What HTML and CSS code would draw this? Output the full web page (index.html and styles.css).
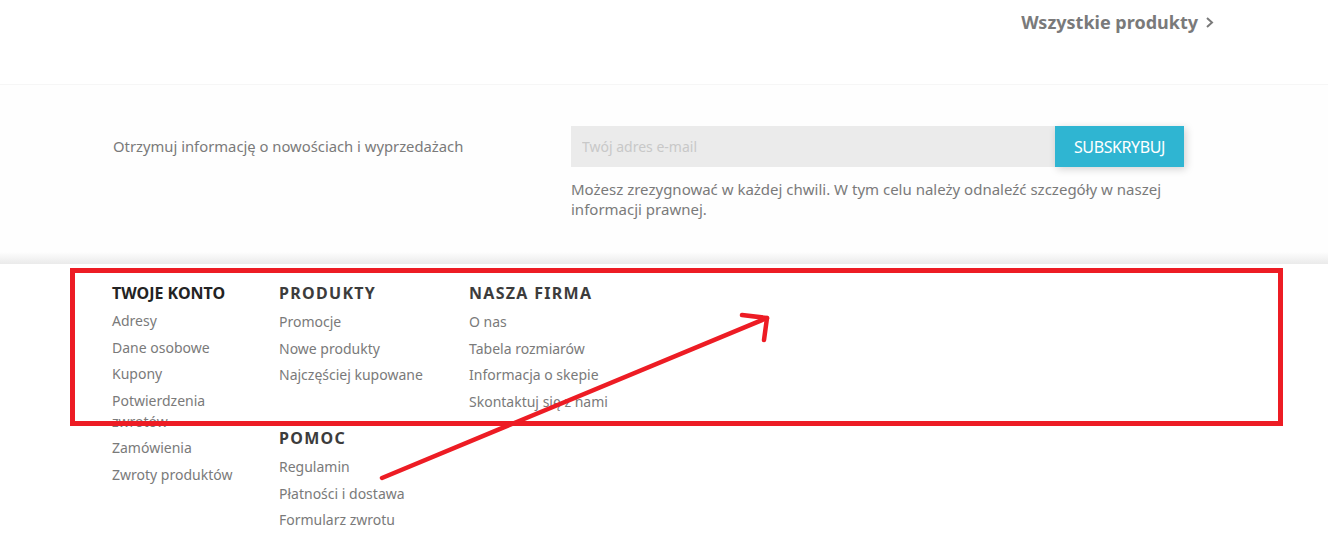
FILE: index.html
```html
<!DOCTYPE html>
<html>
  <head>
    <meta charset="UTF-8">
    <title>Sklep - stopka</title>
    <link rel="stylesheet" href="styles.css">
  </head>
  <body>
    <div class="top-bar">
      <div class="container top-inner">
        <a class="all-products" href="#">Wszystkie produkty
          <svg class="chevron" width="9" height="13" viewBox="0 0 9 13"><polyline points="2,2 7,6.5 2,11" fill="none" stroke="#7a7a7a" stroke-width="2"/></svg>
        </a>
      </div>
    </div>

    <section class="newsletter">
      <div class="container newsletter-row">
        <p class="newsletter-label">Otrzymuj informację o nowościach i wyprzedażach</p>
        <div class="newsletter-form">
          <form class="subscribe">
            <input type="text" name="email" placeholder="Twój adres e-mail">
            <button type="button">Subskrybuj</button>
          </form>
          <p class="conditions">Możesz zrezygnować w każdej chwili. W tym celu należy odnaleźć szczegóły w naszej informacji prawnej.</p>
        </div>
      </div>
    </section>

    <footer class="footer">
      <div class="container footer-row">
        <div class="account">
          <h4 class="account-title">Twoje konto</h4>
          <ul class="links account-links">
            <li><a href="#">Adresy</a></li>
            <li><a href="#">Dane osobowe</a></li>
            <li><a href="#">Kupony</a></li>
            <li><a href="#">Potwierdzenia zwrotów</a></li>
            <li><a href="#">Zamówienia</a></li>
            <li><a href="#">Zwroty produktów</a></li>
          </ul>
        </div>
        <div class="link-blocks">
          <div class="link-block">
            <h4 class="block-title">Produkty</h4>
            <ul class="links">
              <li><a href="#">Promocje</a></li>
              <li><a href="#">Nowe produkty</a></li>
              <li><a href="#">Najczęściej kupowane</a></li>
            </ul>
          </div>
          <div class="link-block">
            <h4 class="block-title">Nasza firma</h4>
            <ul class="links">
              <li><a href="#">O nas</a></li>
              <li><a href="#">Tabela rozmiarów</a></li>
              <li><a href="#">Informacja o skepie</a></li>
              <li><a href="#">Skontaktuj się z nami</a></li>
            </ul>
          </div>
          <div class="link-block">
            <h4 class="block-title">Pomoc</h4>
            <ul class="links">
              <li><a href="#">Regulamin</a></li>
              <li><a href="#">Płatności i dostawa</a></li>
              <li><a href="#">Formularz zwrotu</a></li>
            </ul>
          </div>
        </div>
      </div>
    </footer>

    <!-- annotation drawn over the screenshot -->
    <svg class="annotation" width="1328" height="541" viewBox="0 0 1328 541">
      <rect x="72.5" y="270.5" width="1208" height="153" fill="none" stroke="#ed1c24" stroke-width="5"/>
      <g fill="none" stroke="#ed1c24" stroke-width="4.5" stroke-linecap="round" stroke-linejoin="round">
        <line x1="382" y1="478" x2="767" y2="318"/>
        <polyline points="742,315 767,318 764,340"/>
      </g>
    </svg>
  </body>
</html>
```

FILE: styles.css
```css
* {
  box-sizing: border-box;
}
body {
  margin: 0;
  font-family: "Noto Sans", "Open Sans", sans-serif;
  color: rgb(122, 122, 122);
  background-color: white;
  position: relative;
}
a {
  color: inherit;
  text-decoration: none;
}
.container {
  width: 1104px;
  margin: 0 auto;
}

/* top bar */
.top-bar {
  height: 85px;
  border-bottom: 1px solid rgb(246, 246, 246);
}
.top-inner {
  display: flex;
  justify-content: flex-end;
  padding-top: 10px;
}
.all-products {
  display: flex;
  align-items: center;
  gap: 7px;
  font-size: 18px;
  line-height: 24px;
  font-weight: bold;
  margin-right: 2px;
}

/* newsletter */
.newsletter {
  background: linear-gradient(to bottom, rgb(254, 254, 254) calc(100% - 12px), rgb(234, 234, 234));
  padding: 41px 0 45px;
}
.newsletter-row {
  display: flex;
}
.newsletter-label {
  width: 459px;
  margin: 0;
  padding-top: 10px;
  padding-left: 1px;
  font-size: 14.8px;
  line-height: 20px;
}
.newsletter-form {
  width: 613px;
}
.subscribe {
  display: flex;
  margin: 0;
}
.subscribe input {
  flex: 1;
  height: 41px;
  border: none;
  background-color: rgb(235, 235, 235);
  font-family: inherit;
  font-size: 14px;
  padding: 0 11px;
  color: rgb(122, 122, 122);
}
.subscribe input::placeholder {
  color: rgb(200, 200, 200);
}
.subscribe button {
  width: 129px;
  height: 41px;
  border: none;
  background-color: rgb(47, 181, 210);
  color: white;
  font-family: inherit;
  font-size: 16px;
  letter-spacing: -0.4px;
  text-transform: uppercase;
  box-shadow: 2px 2px 8px rgba(0, 0, 0, 0.18);
  cursor: pointer;
}
.conditions {
  margin: 12px 0 0;
  font-size: 15px;
  line-height: 20px;
}

/* footer */
.footer {
  padding-top: 19px;
  padding-bottom: 20px;
}
.footer-row {
  display: flex;
}
.account {
  width: 167px;
}
.account-title,
.block-title {
  margin: 0 0 7px;
  font-size: 16px;
  line-height: 20px;
  text-transform: uppercase;
}
.account-title {
  color: rgb(35, 35, 35);
}
.block-title {
  color: rgb(60, 60, 60);
  letter-spacing: 1.3px;
  margin-bottom: 8px;
}
.links {
  list-style: none;
  margin: 0;
  padding: 0;
  font-size: 14px;
  line-height: 21px;
}
.links li {
  margin-bottom: 5.5px;
}
.account-links {
  width: 140px;
}
.link-blocks {
  display: grid;
  grid-template-columns: 190px 190px;
  row-gap: 11px;
}

/* annotation */
.annotation {
  position: absolute;
  top: 0;
  left: 0;
  pointer-events: none;
}
```
